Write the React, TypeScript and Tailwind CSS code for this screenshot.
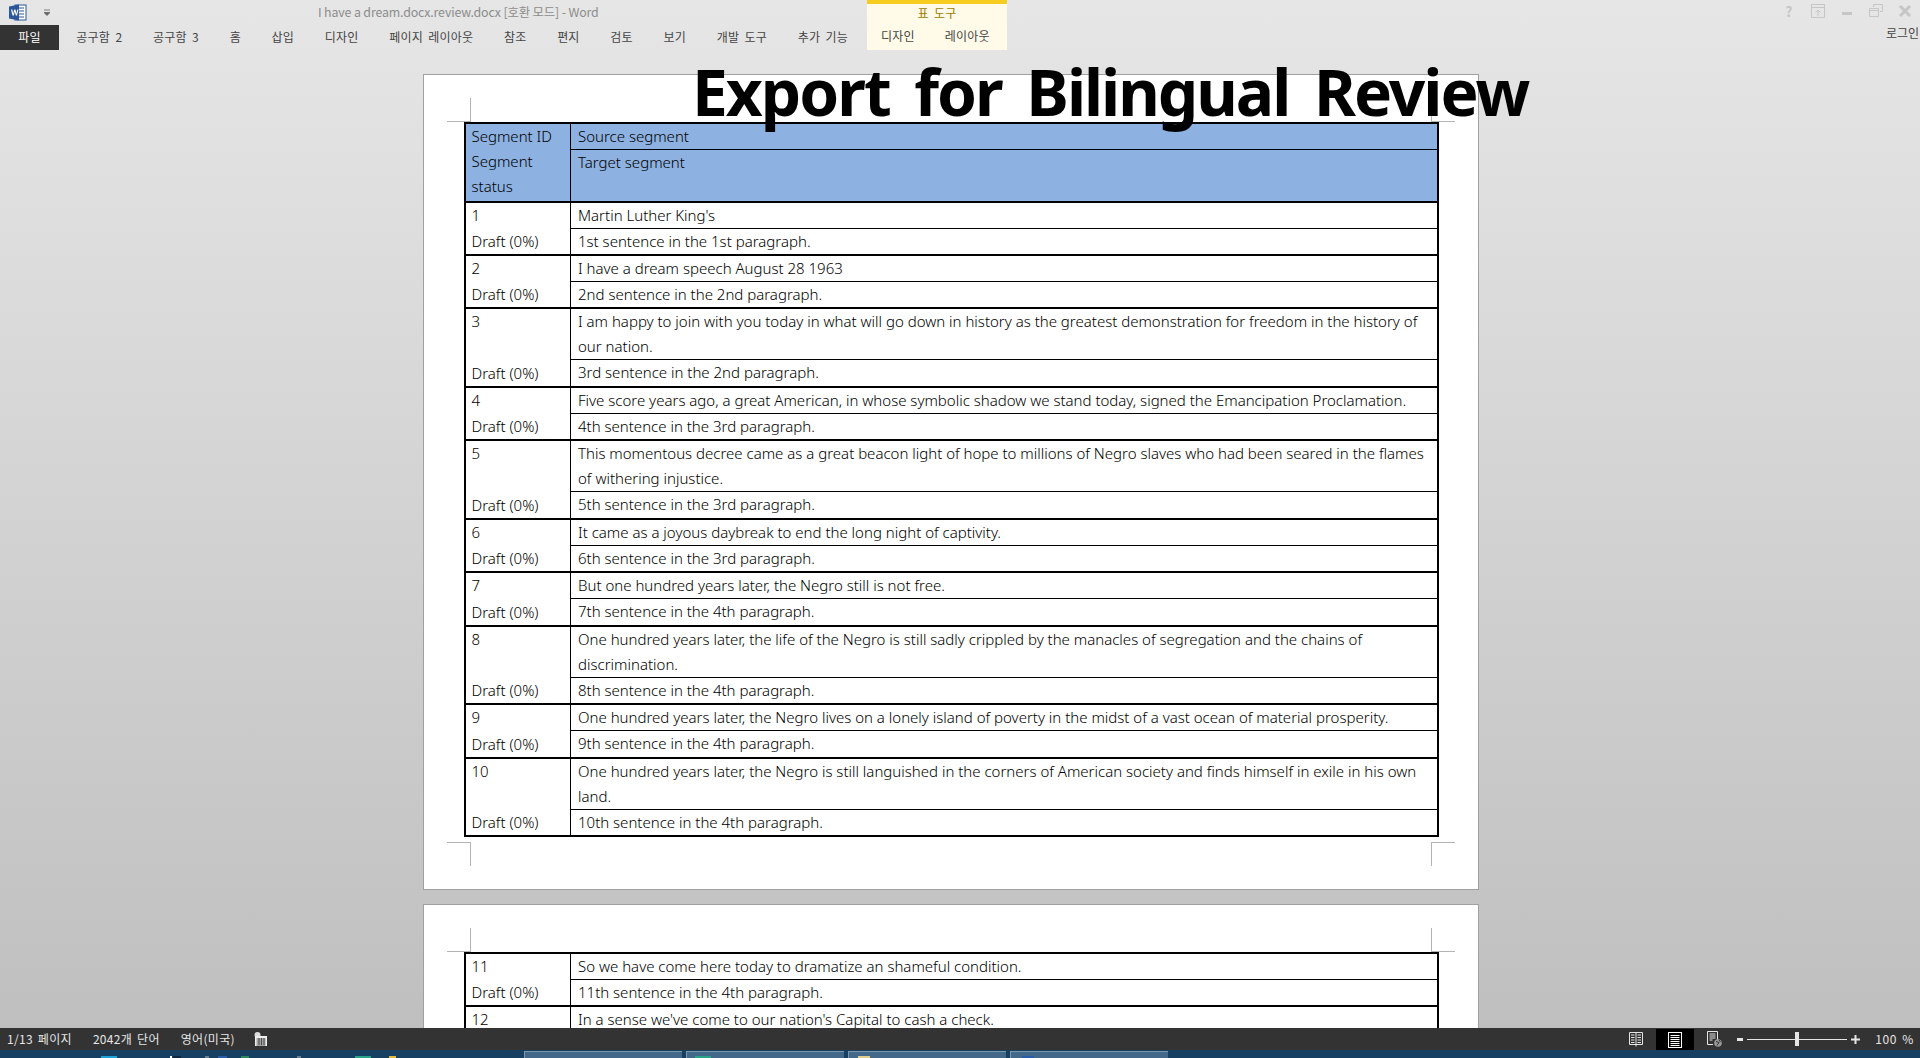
import React from "react";

const segs: [string, string, string][] = [
  ["1", "Martin Luther King's", "1st sentence in the 1st paragraph."],
  ["2", "I have a dream speech August 28 1963", "2nd sentence in the 2nd paragraph."],
  ["3", "I am happy to join with you today in what will go down in history as the greatest demonstration for freedom in the history of our nation.", "3rd sentence in the 2nd paragraph."],
  ["4", "Five score years ago, a great American, in whose symbolic shadow we stand today, signed the Emancipation Proclamation.", "4th sentence in the 3rd paragraph."],
  ["5", "This momentous decree came as a great beacon light of hope to millions of Negro slaves who had been seared in the flames of withering injustice.", "5th sentence in the 3rd paragraph."],
  ["6", "It came as a joyous daybreak to end the long night of captivity.", "6th sentence in the 3rd paragraph."],
  ["7", "But one hundred years later, the Negro still is not free.", "7th sentence in the 4th paragraph."],
  ["8", "One hundred years later, the life of the Negro is still sadly crippled by the manacles of segregation and the chains of discrimination.", "8th sentence in the 4th paragraph."],
  ["9", "One hundred years later, the Negro lives on a lonely island of poverty in the midst of a vast ocean of material prosperity.", "9th sentence in the 4th paragraph."],
  ["10", "One hundred years later, the Negro is still languished in the corners of American society and finds himself in exile in his own land.", "10th sentence in the 4th paragraph."],
];
const segs2: [string, string, string][] = [
  ["11", "So we have come here today to dramatize an shameful condition.", "11th sentence in the 4th paragraph."],
  ["12", "In a sense we've come to our nation's Capital to cash a check.", "12th sentence in the 4th paragraph."],
];

function Seg({ s }: { s: [string, string, string] }) {
  return (
    <div className="grid grid-cols-[105px_1fr] border-t-2 border-black">
      <div className="flex flex-col justify-between border-r border-black pl-[5.5px]">
        <div>{s[0]}</div>
        <div>Draft (0%)</div>
      </div>
      <div>
        <div className="min-h-[25.47px] border-b border-black pl-[7px] pr-[3px]">{s[1]}</div>
        <div className="min-h-[25.47px] pl-[7px]">{s[2]}</div>
      </div>
    </div>
  );
}

function Table({ children }: { children: React.ReactNode }) {
  return (
    <div className="w-[975px] border-x-2 border-b-2 border-black font-['Noto_Sans','Noto_Sans_CJK_KR',sans-serif] text-[15px] font-light leading-[25px] text-black">
      {children}
    </div>
  );
}

function CropTL({ className }: { className: string }) {
  return <div className={"absolute h-[24px] w-[24px] border-b border-r border-[#b4b4b4] " + className} />;
}

const tabs: string[] = ["공구함 2", "공구함 3", "홈", "삽입", "디자인", "페이지 레이아웃", "참조", "편지", "검토", "보기", "개발 도구", "추가 기능"];

function WordIcon() {
  return (
    <svg width="18" height="17" viewBox="0 0 18 17">
      <rect x="6" y="1" width="11" height="15" fill="#ffffff" stroke="#2b579a" />
      <path d="M9 4h6M9 7h6M9 10h6M9 13h6" stroke="#2b579a" />
      <path d="M0 2.5 10 0.5v16L0 14.5z" fill="#2b579a" />
      <path d="M2 5.5h1.3l.9 4.2 1-4.2h1.2l1 4.2.9-4.2h1.2l-1.5 6H6.800l-1-4-1 4H3.500z" fill="#ffffff" />
    </svg>
  );
}

export default function App() {
  return (
    <div className="relative flex h-[1058px] w-[1920px] flex-col overflow-hidden bg-[#163f62] font-['Noto_Sans_CJK_KR','Noto_Sans',sans-serif]">
      <div className="flex h-[1028px] flex-col bg-[linear-gradient(#e6e6e6,#bfbfbf)]">
        {/* Title + ribbon tabs */}
        <header className="flex h-[50px] shrink-0 text-[12px] tracking-[0.2px] text-[#444444] [word-spacing:2.5px]">
          <div className="flex w-[867px] flex-col">
            <div className="flex h-[25px] items-center">
              <div className="ml-[9px] w-[18px]"><WordIcon /></div>
              <svg className="ml-[17px]" width="6" height="8" viewBox="0 0 6 8">
                <path d="M0 1h6M0 3.500h6l-3 3z" fill="#666666" stroke="#666666" strokeWidth="0.8" />
              </svg>
              <div className="ml-[268px] whitespace-nowrap text-[12.4px] tracking-[-0.15px] text-[#8c8c8c] [word-spacing:0]">
                I have a dream.docx.review.docx [호환 모드] - Word
              </div>
            </div>
            <nav className="flex h-[25px] items-center">
              <div className="flex h-[25px] w-[59px] items-center justify-center bg-[#333333] pb-[1px] text-white">파일</div>
              <div className="ml-[2px] flex pb-[2px]">
                {tabs.map((t) => (
                  <div key={t} className="whitespace-nowrap px-[15.35px]">{t}</div>
                ))}
              </div>
            </nav>
          </div>
          <div className="flex h-[50px] w-[140px] flex-col border-t-4 border-[#f6cd1f] bg-[#fffbe8]">
            <div className="flex h-[18px] items-center justify-center text-[#9c7a00]">표 도구</div>
            <div className="mt-[1px] flex h-[25px] items-center pl-[14px]">
              <span>디자인</span>
              <span className="ml-[30px]">레이아웃</span>
            </div>
          </div>
          <div className="flex flex-1 flex-col items-end">
            <div className="flex h-[23px] items-center gap-[14px] pr-[8px] pb-[1px] text-[#c6c6c6]">
              <span className="w-[14px] text-center text-[14px] font-bold">?</span>
              <svg width="14" height="14" viewBox="0 0 14 14" fill="none" stroke="#c6c6c6" className="ml-[1px]">
                <rect x="0.500" y="0.500" width="13" height="13" />
                <path d="M0 3.500h14M7 12V6M4.500 8.500 7 6l2.500 2.500" />
              </svg>
              <svg width="14" height="14" viewBox="0 0 14 14" fill="#c6c6c6" className="ml-[1px]">
                <rect x="2" y="8" width="10" height="3" />
              </svg>
              <svg width="14" height="14" viewBox="0 0 14 14" fill="none" stroke="#c6c6c6" className="ml-[1px]">
                <path d="M4.500 3V.5h9v7H11M.5 4.500h9v8h-9zM.5 6.500h9" />
              </svg>
              <svg width="14" height="14" viewBox="0 0 14 14" fill="none" stroke="#c6c6c6" strokeWidth="3" className="ml-[1px]">
                <path d="M2 2l10 10M12 2 2 12" />
              </svg>
            </div>
            <div className="-mr-[2px] flex h-[20px] w-[36px] items-center overflow-hidden whitespace-nowrap text-[12px] tracking-normal">로그인</div>
          </div>
        </header>

        {/* Document */}
        <main className="min-h-0 flex-1 overflow-hidden pl-[423px] pt-[24px]">
          <section className="relative h-[816px] w-[1056px] border border-[#a0a0a0] bg-white pl-[40px] pt-[47px]">
            <CropTL className="left-[23px] top-[23px]" />
            <div className="absolute left-[1007px] top-[23px] h-[24px] w-[24px] border-b border-l border-[#b4b4b4]" />
            <div className="absolute left-[23px] top-[767px] h-[24px] w-[24px] border-r border-t border-[#b4b4b4]" />
            <div className="absolute left-[1007px] top-[767px] h-[24px] w-[24px] border-l border-t border-[#b4b4b4]" />
            <Table>
              <div className="grid grid-cols-[105px_1fr] border-t-2 border-black bg-[#8db1e1]">
                <div className="border-r border-black pl-[5.5px]">
                  <div>Segment ID</div>
                  <div className="w-[80px]">Segment status</div>
                </div>
                <div>
                  <div className="h-[25.5px] border-b border-black pl-[7px]">Source segment</div>
                  <div className="h-[51px] pl-[7px]">Target segment</div>
                </div>
              </div>
              {segs.map((s) => <Seg key={s[0]} s={s} />)}
            </Table>
          </section>
          <section className="relative mt-[14px] h-[816px] w-[1056px] border border-[#a0a0a0] bg-white pl-[40px] pt-[47px]">
            <CropTL className="left-[23px] top-[23px]" />
            <div className="absolute left-[1007px] top-[23px] h-[24px] w-[24px] border-b border-l border-[#b4b4b4]" />
            <Table>
              {segs2.map((s) => <Seg key={s[0]} s={s} />)}
            </Table>
          </section>
        </main>
      </div>

      {/* Heading pasted over the page */}
      <div className="absolute left-[692px] top-[47px] whitespace-nowrap font-['Noto_Sans',sans-serif] text-[64px] font-bold leading-[90px] tracking-[-2px] text-black [word-spacing:10px]">
        Export for Bilingual Review
      </div>

      {/* Status bar */}
      <footer className="flex h-[22px] shrink-0 items-center bg-[#333333] text-[12px] tracking-[0.3px] text-[#e6e6e6] [word-spacing:2px]">
        <span className="ml-[7px] whitespace-nowrap">1/13 페이지</span>
        <span className="ml-[21px] whitespace-nowrap">2042개 단어</span>
        <span className="ml-[21px] whitespace-nowrap">영어(미국)</span>
        <svg className="ml-[19px]" width="14" height="14" viewBox="0 0 14 14">
          <circle cx="3.500" cy="3" r="3" fill="#dddddd" />
          <rect x="1" y="4" width="12" height="10" fill="#eeeeee" />
          <path d="M2.500 7h9M2.500 9h9M2.500 11h9M2.500 13h9M5 6v7M7.500 6v7M10 6v7" stroke="#333333" strokeWidth="0.8" />
        </svg>
        <div className="ml-auto flex h-full items-center">
          <svg width="14" height="16" viewBox="0 0 14 16" fill="none" stroke="#e6e6e6">
            <path d="M.5 1.500H7v12H.5zM7 1.500h6.500v12H7M2 4h3.500M2 6.500h3.500M2 9h3.500M8.500 4H12M8.500 6.500H12M8.500 9H12M2 11.500h3.500M8.500 11.500H12M7 13.500v2" />
          </svg>
          <div className="ml-[13px] flex h-[21px] w-[38px] items-center justify-center self-end bg-black">
            <svg width="14" height="16" viewBox="0 0 14 16" fill="none" stroke="#ffffff">
              <rect x="0.500" y="0.500" width="13" height="15" />
              <path d="M2.500 3.500h9M2.500 5.500h9M2.500 7.500h9M2.500 9.500h9M2.500 11.500h9M2.500 13.500h9" />
            </svg>
          </div>
          <svg className="ml-[13px]" width="15" height="16" viewBox="0 0 15 16" fill="none">
            <path d="M.5.5h10V9M.5.5v13H6M2.500 3h6M2.500 5h6M2.500 7h6M2.500 9h3" stroke="#e6e6e6" />
            <circle cx="11" cy="12" r="3.800" fill="#9a9a9a" />
            <path d="M9 10.500l3 1-2 3M12 9l1.500 2" stroke="#333333" />
          </svg>
          <div className="ml-[15px] h-[3px] w-[6px] bg-[#e6e6e6]" />
          <div className="relative ml-[4px] flex h-[14px] w-[100px] items-center">
            <div className="h-px w-full bg-[#e6e6e6]" />
            <div className="absolute left-[48px] h-[14px] w-[4px] bg-[#e6e6e6]" />
          </div>
          <svg className="ml-[4px]" width="9" height="9" viewBox="0 0 9 9" fill="#e6e6e6">
            <path d="M3.500 0h2v3.500H9v2H5.500V9h-2V5.500H0v-2h3.500z" />
          </svg>
          <span className="ml-[15px] mr-[6px] whitespace-nowrap tracking-[0.6px]">100 %</span>
        </div>
      </footer>

      {/* Windows taskbar */}
      <div className="relative flex h-[8px] shrink-0 items-end overflow-hidden bg-[#163f62]">
        <span className="ml-[101px] h-[2px] w-[16px] bg-[#1ea3d6]" />
        <span className="ml-[53px] h-[2px] w-[2px] bg-white" />
        <span className="ml-[1px] h-[2px] w-[8px] bg-[#10283e]" />
        <span className="ml-[24px] h-[2px] w-[4px] bg-[#6a7f92]" />
        <span className="ml-[9px] h-[2px] w-[9px] bg-[#2a5caa]" />
        <span className="ml-[14px] h-[2px] w-[8px] bg-[#2c8a5a]" />
        <span className="ml-[48px] h-[2px] w-[4px] bg-[#6a7f92]" />
        <span className="ml-[54px] h-[2px] w-[16px] bg-[#2aa486]" />
        <span className="ml-[18px] h-[2px] w-[7px] bg-[#e2b93b]" />
        <div className="ml-[128px] mt-[1px] flex h-[7px] gap-[4px] self-start">
          <div className="h-full w-[158px] border-l border-t border-[#7d97ad] bg-[#44688a]" />
          <div className="flex h-full w-[158px] items-end border-l border-t border-[#7d97ad] bg-[#44688a] pl-[8px]">
            <span className="h-[2px] w-[16px] bg-[#2aa486]" />
          </div>
          <div className="flex h-full w-[158px] items-end border-l border-t border-[#7d97ad] bg-[#44688a] pl-[9px]">
            <span className="h-[2px] w-[12px] bg-[#e2cf8f]" />
          </div>
          <div className="flex h-full w-[158px] items-end border-l border-t border-[#7d97ad] bg-[#44688a] pl-[11px]">
            <span className="h-[2px] w-[12px] bg-[#2a5caa]" />
          </div>
        </div>
      </div>
    </div>
  );
}
